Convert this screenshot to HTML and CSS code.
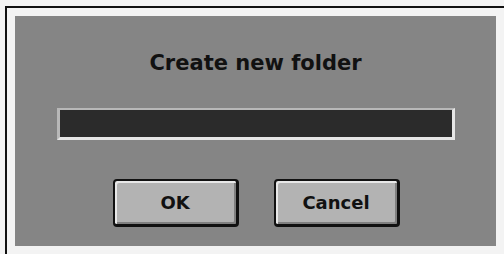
FILE: index.html
```html
<!DOCTYPE html>
<html>
<head>
<meta charset="utf-8">
<link rel="stylesheet" href="styles.css">
</head>
<body>
<div class="frame">
  <div class="panel">
    <div class="title">Create new folder</div>
    <div class="field"></div>
    <div class="buttons">
      <button class="btn">OK</button>
      <button class="btn">Cancel</button>
    </div>
  </div>
</div>
</body>
</html>
```
FILE: styles.css
```css
html, body {
  margin: 0;
  padding: 0;
  background: #f3f3f3;
  width: 504px;
  height: 254px;
  overflow: hidden;
}
.frame {
  margin: 6px 0 0 5px;
  border-top: 2px solid #111;
  border-left: 2px solid #111;
  padding: 8px;
}
.panel {
  height: 230px;
  box-sizing: border-box;
  background: #858585;
  padding-top: 35px;
  display: flex;
  flex-direction: column;
  align-items: center;
  font-family: "DejaVu Sans", sans-serif;
  font-weight: bold;
  color: #111;
}
.title {
  font-size: 21px;
  line-height: 24px;
}
.field {
  margin-top: 33px;
  width: 398px;
  height: 32px;
  box-sizing: border-box;
  background: #2b2b2b;
  border-top: 2px solid #b8b8b8;
  border-left: 3px solid #b8b8b8;
  border-right: 3px solid #e6e6e6;
  border-bottom: 3px solid #e6e6e6;
}
.buttons {
  margin-top: 39px;
  display: flex;
  gap: 35px;
  padding-left: 1px;
}
.btn {
  width: 126px;
  height: 48px;
  box-sizing: border-box;
  background: #b3b3b3;
  border: 2px solid #111;
  border-right-width: 3px;
  border-bottom-width: 3px;
  border-radius: 4px;
  box-shadow: inset 2px 2px 0 #e8e8e8, inset -2px -2px 0 #808080;
  font-family: "DejaVu Sans", sans-serif;
  font-weight: bold;
  font-size: 18px;
  color: #111;
  padding: 0;
}
```
